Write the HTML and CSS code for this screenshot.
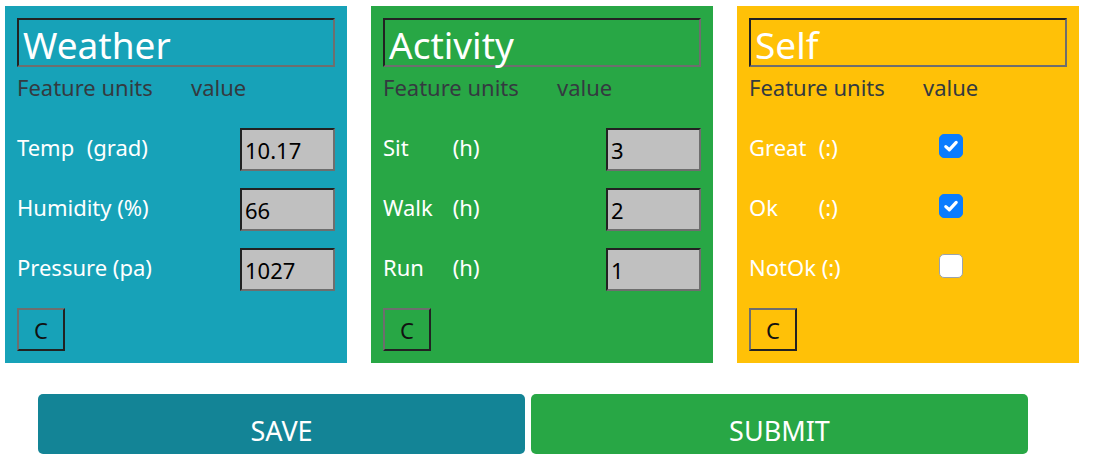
FILE: index.html
```html
<!DOCTYPE html>
<html>
<head>
<meta charset="utf-8">
<link rel="stylesheet" href="styles.css">
</head>
<body>
<div class="panels">
  <section class="panel panel-weather">
    <div class="title">Weather</div>
    <div class="head"><span class="head-feature">Feature units</span><span>value</span></div>
    <div class="rows">
      <div class="row"><span class="label"><span class="feat">Temp</span> (grad)</span><span class="field">10.17</span></div>
      <div class="row"><span class="label"><span class="feat">Humidity</span> (%)</span><span class="field">66</span></div>
      <div class="row"><span class="label"><span class="feat">Pressure</span> (pa)</span><span class="field">1027</span></div>
      <div class="cbtn">C</div>
    </div>
  </section>
  <section class="panel panel-activity">
    <div class="title">Activity</div>
    <div class="head"><span class="head-feature">Feature units</span><span>value</span></div>
    <div class="rows">
      <div class="row"><span class="label"><span class="feat">Sit</span> (h)</span><span class="field">3</span></div>
      <div class="row"><span class="label"><span class="feat">Walk</span> (h)</span><span class="field">2</span></div>
      <div class="row"><span class="label"><span class="feat">Run</span> (h)</span><span class="field">1</span></div>
      <div class="cbtn">C</div>
    </div>
  </section>
  <section class="panel panel-self">
    <div class="title">Self</div>
    <div class="head"><span class="head-feature">Feature units</span><span>value</span></div>
    <div class="rows">
      <div class="row"><span class="label"><span class="feat">Great</span> (:)</span><span class="check on"><svg viewBox="0 0 24 24" width="24" height="24"><path d="M6.8 12.6 L10.3 15.8 L17.2 8.4" fill="none" stroke="#fff" stroke-width="3.2" stroke-linecap="round" stroke-linejoin="round"/></svg></span></div>
      <div class="row"><span class="label"><span class="feat">Ok</span> (:)</span><span class="check on"><svg viewBox="0 0 24 24" width="24" height="24"><path d="M6.8 12.6 L10.3 15.8 L17.2 8.4" fill="none" stroke="#fff" stroke-width="3.2" stroke-linecap="round" stroke-linejoin="round"/></svg></span></div>
      <div class="row"><span class="label"><span class="feat">NotOk</span> (:)</span><span class="check"></span></div>
      <div class="cbtn">C</div>
    </div>
  </section>
</div>
<div class="actions">
  <div class="btn btn-save">SAVE</div>
  <div class="btn btn-submit">SUBMIT</div>
</div>
</body>
</html>
```
FILE: styles.css
```css
html, body {
  margin: 0;
  padding: 0;
  background: #fff;
  font-family: "Noto Sans", "Open Sans", sans-serif;
}
.panels {
  display: flex;
  gap: 24px;
  padding: 6px 5px 0 5px;
}
.panel {
  width: 342px;
  height: 357px;
  box-sizing: border-box;
  padding: 12px;
  display: flex;
  flex-direction: column;
}
.panel-weather { background: #17a2b8; }
.panel-activity { background: #28a745; }
.panel-self { background: #ffc107; }
.title {
  height: 49px;
  box-sizing: border-box;
  border: 2px solid;
  border-color: #222 #6e6e6e #6e6e6e #222;
  color: #fff;
  font-size: 37px;
  line-height: 41px;
  padding: 4px 0 0 4px;
}
.head {
  height: 44px;
  line-height: 40px;
  font-size: 22px;
  color: #343a40;
  display: flex;
  margin-bottom: 17px;
}
.head-feature { width: 174px; }
.rows {
  display: flex;
  flex-direction: column;
  gap: 17px;
}
.row {
  height: 43px;
  display: flex;
  align-items: center;
  justify-content: space-between;
  color: #fff;
  font-size: 22px;
}
.label {
  white-space: nowrap;
  padding-bottom: 6px;
}
.feat { display: inline-block; min-width: 64px; }
.field {
  width: 95px;
  height: 43px;
  box-sizing: border-box;
  border: 2px solid;
  border-color: #222 #6e6e6e #6e6e6e #222;
  background: #c0c0c0;
  color: #000;
  font-size: 22px;
  line-height: 41px;
  padding-left: 3px;
}
.check {
  width: 24px;
  height: 24px;
  box-sizing: border-box;
  border-radius: 5px;
  background: #fff;
  border: 1.5px solid #9aa3ad;
  margin-right: 104px;
  margin-bottom: 7px;
  display: block;
  position: relative;
}
.check.on {
  background: #0a7cff;
  border-color: #0a7cff;
}
.check svg {
  position: absolute;
  left: -1.5px;
  top: -1.5px;
}
.cbtn {
  width: 48px;
  height: 43px;
  box-sizing: border-box;
  border: 2px solid;
  border-color: #6e6e6e #222 #222 #6e6e6e;
  color: #111;
  font-size: 22px;
  display: flex;
  align-items: center;
  justify-content: center;
}
.actions {
  display: flex;
  gap: 6px;
  padding: 31px 0 0 38px;
}
.btn {
  height: 60px;
  border-radius: 5px;
  color: #fff;
  font-size: 27px;
  display: flex;
  align-items: center;
  justify-content: center;
  padding-top: 13px;
  box-sizing: border-box;
}
.btn-save { width: 487px; background: #138496; }
.btn-submit { width: 497px; background: #28a745; }
```
